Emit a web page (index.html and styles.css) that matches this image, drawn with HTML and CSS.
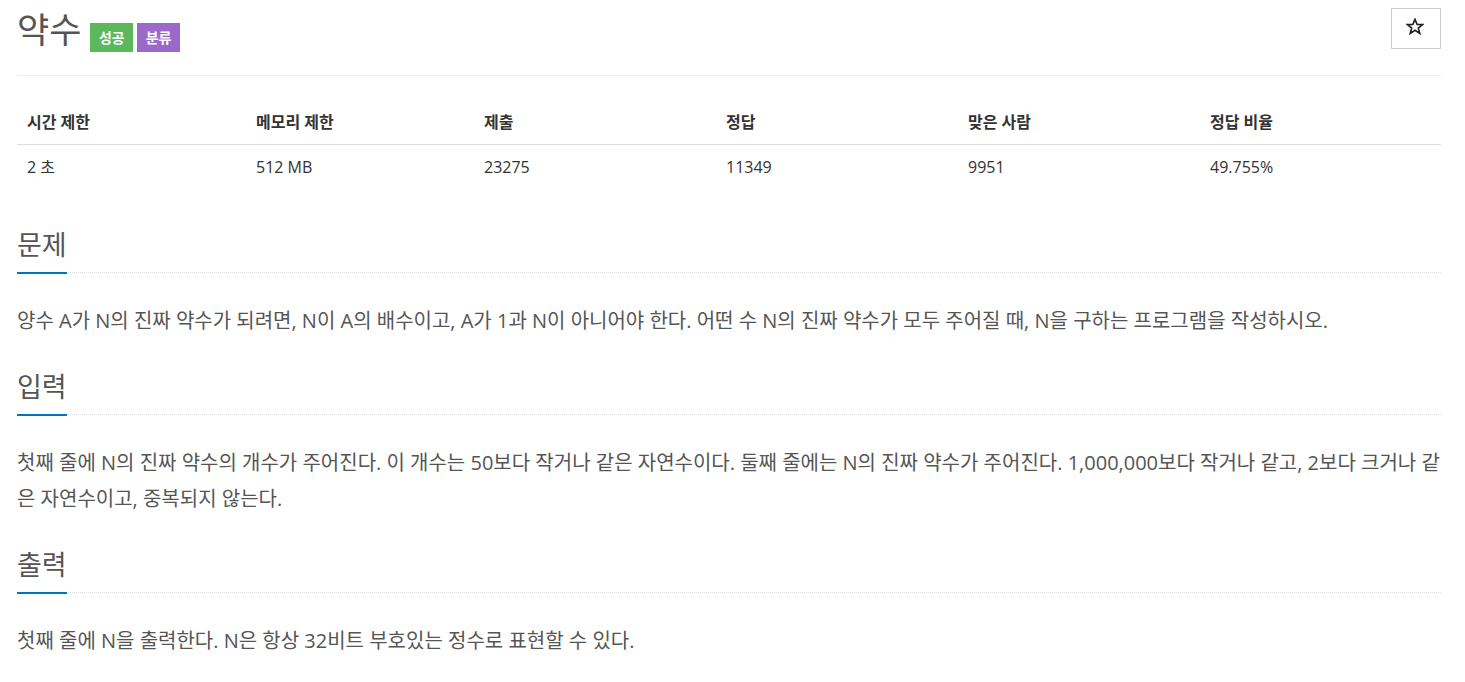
FILE: index.html
```html
<!DOCTYPE html>
<html lang="ko">
<head>
<meta charset="utf-8">
<title>약수</title>
<link rel="stylesheet" href="styles.css">
</head>
<body>
<div class="container">
  <div class="page-header">
    <h1 class="title">약수</h1>
    <span class="badge badge-ac">성공</span>
    <span class="badge badge-tag">분류</span>
    <button class="star-btn" type="button" aria-label="즐겨찾기">
      <svg width="18" height="17" viewBox="0 0 18 17"><polygon points="9,1.2 11.1,6.4 16.6,6.6 12.3,10 13.8,15.5 9,12.3 4.2,15.5 5.7,10 1.4,6.6 6.9,6.4" fill="none" stroke="#222" stroke-width="1.6" stroke-linejoin="miter"/></svg>
    </button>
  </div>

  <table class="info">
    <thead>
      <tr><th>시간 제한</th><th>메모리 제한</th><th>제출</th><th>정답</th><th>맞은 사람</th><th>정답 비율</th></tr>
    </thead>
    <tbody>
      <tr><td>2 초</td><td>512 MB</td><td>23275</td><td>11349</td><td>9951</td><td>49.755%</td></tr>
    </tbody>
  </table>

  <section class="problem-section">
    <div class="headline"><h2>문제</h2></div>
    <p>양수 A가 N의 진짜 약수가 되려면, N이 A의 배수이고, A가 1과 N이 아니어야 한다. 어떤 수 N의 진짜 약수가 모두 주어질 때, N을 구하는 프로그램을 작성하시오.</p>
  </section>

  <section class="problem-section">
    <div class="headline"><h2>입력</h2></div>
    <p>첫째 줄에 N의 진짜 약수의 개수가 주어진다. 이 개수는 50보다 작거나 같은 자연수이다. 둘째 줄에는 N의 진짜 약수가 주어진다. 1,000,000보다 작거나 같고, 2보다 크거나 같은 자연수이고, 중복되지 않는다.</p>
  </section>

  <section class="problem-section">
    <div class="headline"><h2>출력</h2></div>
    <p>첫째 줄에 N을 출력한다. N은 항상 32비트 부호있는 정수로 표현할 수 있다.</p>
  </section>
</div>
</body>
</html>
```
FILE: styles.css
```css
* { box-sizing: border-box; }
html, body { margin: 0; padding: 0; background: #fff; }
body {
  font-family: "Open Sans", "Noto Sans CJK KR", sans-serif;
  color: #333;
}
.container {
  width: 1424px;
  margin-left: 17px;
}
.page-header {
  display: flex;
  align-items: flex-start;
  height: 76px;
  border-bottom: 1px solid #eee;
}
.title {
  margin: 9px 0 0;
  font-size: 35px;
  line-height: 42px;
  font-weight: 400;
  color: #555;
}
.badge {
  margin-top: 23px;
  height: 29px;
  line-height: 29px;
  padding: 0 8.5px;
  font-size: 14px;
  font-weight: 700;
  color: #fff;
}
.badge-ac { background: #5cb85c; margin-left: 9px; }
.badge-tag { background: #9b69c9; margin-left: 4px; }
.star-btn {
  margin: 8px 0 0 auto;
  width: 50px;
  height: 41px;
  background: #fff;
  border: 1px solid #ccc;
  padding: 0 3px 4px 0;
  display: flex;
  align-items: center;
  justify-content: center;
}
.info {
  margin-top: 24px;
  width: 1424px;
  border-collapse: collapse;
  table-layout: fixed;
  font-size: 16px;
}
.info th, .info td {
  text-align: left;
  padding: 11px 10px;
  line-height: 22px;
}
.info th { font-weight: 700; border-bottom: 1px solid #ddd; color: #333; }
.info td { color: #333; }
.info th:nth-child(1) { width: 229px; }
.info th:nth-child(2) { width: 228px; }
.info th:nth-child(3) { width: 242px; }
.info th:nth-child(4) { width: 242px; }
.info th:nth-child(5) { width: 242px; }
.info th:nth-child(6) { width: 241px; }
.problem-section { margin-top: 33px; }
.problem-section:first-of-type { margin-top: 41px; }
.headline {
  display: flex;
  border-bottom: 1px dotted #ddd;
}
.headline h2 {
  margin: 0 0 -2px;
  font-size: 27px;
  line-height: 30px;
  font-weight: 400;
  color: #555;
  padding-bottom: 12px;
  border-bottom: 2px solid #0076c0;
}
.problem-section p {
  margin: 30px 0 0;
  font-size: 20px;
  line-height: 36px;
  color: #555;
}
```
